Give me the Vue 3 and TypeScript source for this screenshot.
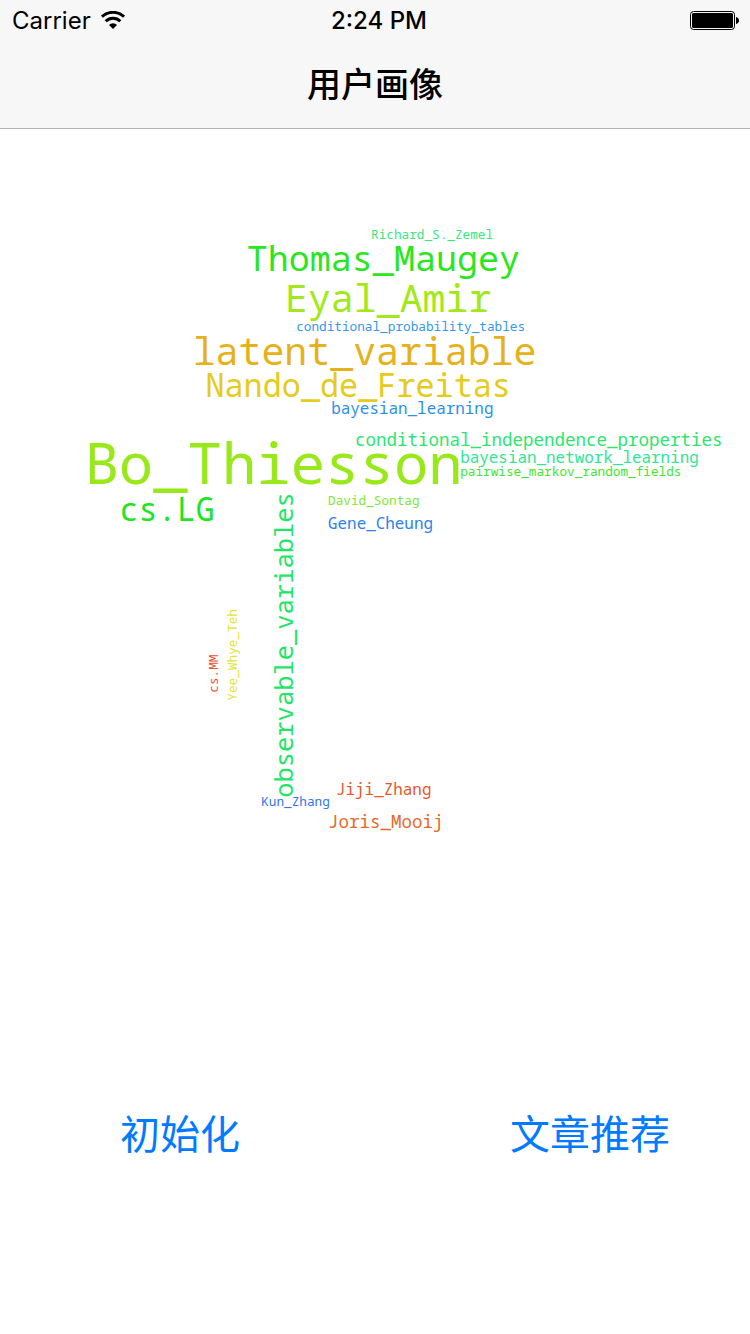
<script setup lang="ts">
interface Word {
  text: string
  x: number
  y: number
  size: number
  color: string
  vertical?: boolean
}

const words: Word[] = [
  { text: 'Richard_S._Zemel', x: 233, y: 69, size: 8, color: '#37e77f' },
  { text: 'Thomas_Maugey', x: 155, y: 89, size: 22, color: '#2ae61c' },
  { text: 'Eyal_Amir', x: 179, y: 115, size: 24, color: '#a3e81a' },
  { text: 'conditional_probability_tables', x: 186, y: 127, size: 8, color: '#3497ea' },
  { text: 'latent_variable', x: 121, y: 148, size: 24, color: '#e6b21c' },
  { text: 'Nando_de_Freitas', x: 129, y: 168, size: 20, color: '#e6cb1c' },
  { text: 'bayesian_learning', x: 208, y: 179, size: 10, color: '#2d8fe9' },
  { text: 'Bo_Thiesson', x: 53, y: 223, size: 36, color: '#99e81a' },
  { text: 'conditional_independence_properties', x: 223, y: 199, size: 11, color: '#2be66f' },
  { text: 'bayesian_network_learning', x: 289, y: 210, size: 10, color: '#2ee695' },
  { text: 'pairwise_markov_random_fields', x: 289, y: 218, size: 8, color: '#42e634' },
  { text: 'cs.LG', x: 75, y: 246, size: 20, color: '#1ce61f' },
  { text: 'David_Sontag', x: 206, y: 236, size: 8, color: '#81e834' },
  { text: 'Gene_Cheung', x: 206, y: 251, size: 10, color: '#2b82e9' },
  { text: 'observable_variables', x: 184, y: 420, size: 16, color: '#1fe668', vertical: true },
  { text: 'Yee_Whye_Teh', x: 149, y: 359, size: 8, color: '#e2e334', vertical: true },
  { text: 'cs.MM', x: 137, y: 354, size: 8, color: '#e95334', vertical: true },
  { text: 'Jiji_Zhang', x: 211, y: 418, size: 10, color: '#e6572b' },
  { text: 'Kun_Zhang', x: 164, y: 425, size: 8, color: '#3476ea' },
  { text: 'Joris_Mooij', x: 206, y: 439, size: 11, color: '#e66a2b' },
]

const rotation = (w: Word): string | undefined =>
  w.vertical ? `rotate(-90 ${w.x} ${w.y})` : undefined
</script>

<template>
  <div class="screen">
    <header class="top">
      <div class="status">
        <div class="carrier">
          <span>Carrier</span>
          <svg class="wifi" viewBox="0 0 24 18" aria-label="Wi-Fi">
            <path d="M1 5.700a16 16 0 0 1 22 0" />
            <path d="M4.700 10.200a10.400 10.400 0 0 1 14.600 0" />
            <path class="dot" d="M12 18 8 14a5.700 5.700 0 0 1 8 0z" />
          </svg>
        </div>
        <span class="time">2:24 PM</span>
        <svg class="battery" viewBox="0 0 50 20" aria-label="Battery full">
          <rect class="shell" x="0.5" y="0.5" width="44" height="18" rx="3" />
          <rect x="2" y="2" width="41" height="15" rx="1.5" />
          <path d="M46 6c1.8.3 3 1.700 3 3.500s-1.200 3.200-3 3.500z" />
        </svg>
      </div>
      <h1 class="title">用户画像</h1>
    </header>

    <main>
      <svg class="cloud" viewBox="0 0 471 600" role="img" aria-label="用户画像">
        <text
          v-for="w in words"
          :key="w.text"
          :x="w.x"
          :y="w.y"
          :font-size="w.size"
          :fill="w.color"
          :transform="rotation(w)"
        >{{ w.text }}</text>
      </svg>
      <div class="actions">
        <button type="button">初始化</button>
        <button type="button">文章推荐</button>
      </div>
    </main>
  </div>
</template>

<style>
body {
  margin: 0;
  background: #fff;
}
</style>

<style scoped>
.screen {
  min-height: 100vh;
  background: #fff;
  color: #000;
  font-family: Inter, "Noto Sans CJK SC", sans-serif;
}

.top {
  background: #f7f7f7;
  border-bottom: 1px solid #b2b2b2;
}

.status {
  display: grid;
  grid-template-columns: 1fr auto 1fr;
  align-items: center;
  height: 42px;
  padding: 0 4px 0 12px;
  font-size: 24px;
  line-height: 42px;
}

.carrier {
  display: flex;
  align-items: center;
  gap: 10px;
}

.wifi {
  width: 24px;
  height: 18px;
  margin-bottom: 2px;
  fill: none;
  stroke: #000;
  stroke-width: 3;
}

.wifi .dot {
  fill: #000;
  stroke: none;
}

.time {
  font-weight: 500;
}

.battery {
  justify-self: end;
  width: 50px;
  height: 20px;
  margin-right: 6px;
}

.shell {
  fill: none;
  stroke: #000;
}

.title {
  margin: 0;
  height: 86px;
  font-family: "Noto Sans CJK SC", sans-serif;
  font-size: 34px;
  font-weight: 500;
  line-height: 82px;
  text-align: center;
}

.cloud {
  display: block;
  width: 100%;
}

.cloud text {
  font-family: "Noto Sans Mono", "Droid Sans Mono", "DejaVu Sans Mono", monospace;
}

.actions {
  display: flex;
  justify-content: space-between;
  padding: 18px 80px 0 120px;
}

.actions button {
  padding: 0;
  border: 0;
  background: none;
  color: #007aff;
  font-family: "Noto Sans CJK SC", sans-serif;
  font-size: 40px;
  line-height: 60px;
  cursor: pointer;
}
</style>
